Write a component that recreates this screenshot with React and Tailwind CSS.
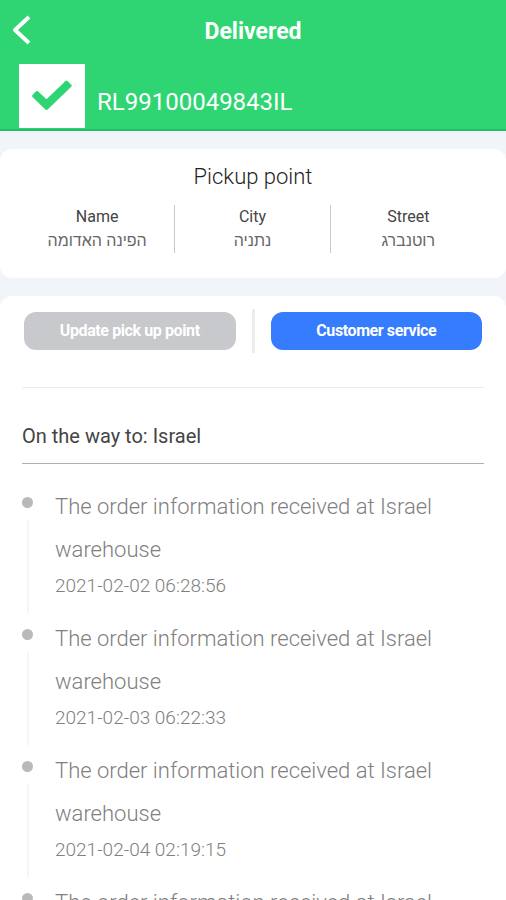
const PICKUP = [
  { label: 'Name', value: 'הפינה האדומה' },
  { label: 'City', value: 'נתניה' },
  { label: 'Street', value: 'רוטנברג' },
]

const EVENTS = [
  { text: 'The order information received at Israel warehouse', time: '2021-02-02 06:28:56' },
  { text: 'The order information received at Israel warehouse', time: '2021-02-03 06:22:33' },
  { text: 'The order information received at Israel warehouse', time: '2021-02-04 02:19:15' },
  { text: 'The order information received at Israel warehouse', time: '2021-02-05 05:41:08' },
]

function Header() {
  return (
    <header className="border-b-2 border-[#24be65] bg-[#2fd573] text-white">
      <div className="grid grid-cols-[48px_1fr_48px] items-center pt-2">
        <button type="button" aria-label="Back" className="flex h-11 items-center pl-3">
          <svg width="20" height="30" viewBox="0 0 20 30" fill="none" stroke="currentColor" strokeWidth="4" strokeLinejoin="round">
            <path d="M17 2 L3 15 L17 28" />
          </svg>
        </button>
        <h1 className="pt-1 text-center text-[23px] font-bold">Delivered</h1>
      </div>
      <div className="flex items-end gap-3 pt-3 pb-px pl-[19px]">
        <div className="flex h-16 w-[66px] items-center justify-center bg-white text-[#2fd573]">
          <svg width="42" height="34" viewBox="0 0 42 34" fill="none">
            <path
              d="M1.500 16 L5 12.300 Q6 11.500 7 12.300 L15.500 20.300 L34.500 2 Q35.500 1.100 36.500 2 L40.300 5.800 Q41.300 6.800 40.300 7.800 L16.600 30.500 Q15.500 31.500 14.400 30.500 L1.500 18 Q.6 17 1.500 16 Z"
              fill="currentColor"
            />
          </svg>
        </div>
        <p className="pb-2.5 text-2xl">RL99100049843IL</p>
      </div>
    </header>
  )
}

function PickupCard() {
  return (
    <section className="rounded-xl bg-white px-5 pt-3 pb-[25px]">
      <h2 className="text-center text-[22px] leading-8 font-light text-[#222]">Pickup point</h2>
      <dl className="mt-3 grid grid-cols-3 divide-x divide-[#c8c8c8] text-center">
        {PICKUP.map(p => (
          <div key={p.label} className="text-base leading-6 text-[#444]">
            <dt>{p.label}</dt>
            <dd dir="rtl" className="font-['Liberation_Sans',sans-serif] text-[#666]">{p.value}</dd>
          </div>
        ))}
      </dl>
    </section>
  )
}

function TrackEvent({ text, time }) {
  return (
    <li className="flex gap-[22px] text-[#808080]">
      {/* Dot with the line down to the next event */}
      <div className="flex w-[11px] flex-col items-center pt-3">
        <span className="size-[11px] rounded-full bg-[#b9b9b9]" />
        <span className="mt-3 mb-1 w-0.5 flex-1 bg-[#f5f5f5]" />
      </div>
      <div className="flex-1 pr-10 pb-4">
        <p className="text-[22px] leading-[43px] font-light">{text}</p>
        <time className="block text-[19px] leading-[30px] font-light">{time}</time>
      </div>
    </li>
  )
}

export default function App() {
  return (
    <div className="flex min-h-screen flex-col bg-[#f1f4f8] font-['Roboto','Open_Sans',sans-serif]">
      <Header />
      <main className="flex flex-1 flex-col gap-[18px] pt-[18px]">
        <PickupCard />
        <section className="flex-1 rounded-t-xl bg-white px-[22px] pt-[13px]">
          <div className="flex items-center gap-4 px-0.5 text-base font-bold tracking-tight text-white">
            <button type="button" disabled className="h-[38px] flex-1 rounded-xl bg-[#c8c9cc]">Update pick up point</button>
            <span className="h-11 w-[3px] bg-[#ececec]" />
            <button type="button" className="h-[38px] flex-1 rounded-xl bg-[#367cff]">Customer service</button>
          </div>
          <h2 className="mt-[34px] border-y border-t-[#ececec] border-b-[#b0b0b0] pt-8 pb-[11px] text-xl leading-8 text-[#444]">
            On the way to: Israel
          </h2>
          <ol className="pt-[21px]">
            {EVENTS.map(e => <TrackEvent key={e.time} {...e} />)}
          </ol>
        </section>
      </main>
    </div>
  )
}
